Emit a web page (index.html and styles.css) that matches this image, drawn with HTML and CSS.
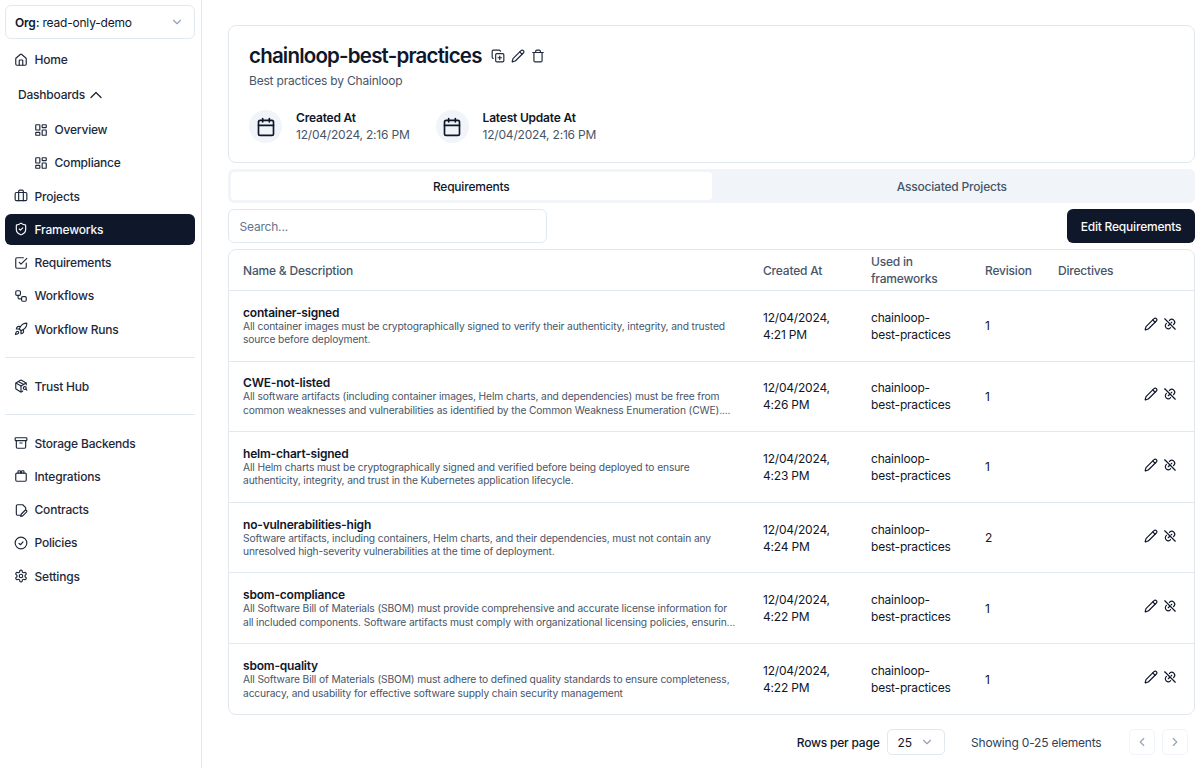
FILE: index.html
```html
<!DOCTYPE html>
<html lang="en">
<head>
  <meta charset="UTF-8">
  <title>chainloop-best-practices</title>
  <link rel="stylesheet" href="styles.css">
</head>
<body>
  <svg class="sprites" width="0" height="0" aria-hidden="true">
    <symbol id="i-home" viewBox="0 0 24 24"><path d="M15 21v-8a1 1 0 0 0-1-1h-4a1 1 0 0 0-1 1v8"/><path d="M3 10a2 2 0 0 1 .709-1.528l7-5.999a2 2 0 0 1 2.582 0l7 5.999A2 2 0 0 1 21 10v9a2 2 0 0 1-2 2H5a2 2 0 0 1-2-2z"/></symbol>
    <symbol id="i-grid" viewBox="0 0 24 24"><rect x="3" y="3" width="7" height="9" rx="1"/><rect x="14" y="3" width="7" height="5" rx="1"/><rect x="14" y="12" width="7" height="9" rx="1"/><rect x="3" y="16" width="7" height="5" rx="1"/></symbol>
    <symbol id="i-briefcase" viewBox="0 0 24 24"><path d="M16 20V4a2 2 0 0 0-2-2h-4a2 2 0 0 0-2 2v16"/><rect x="2" y="6" width="20" height="14" rx="2"/></symbol>
    <symbol id="i-shield" viewBox="0 0 24 24"><path d="M20 13c0 5-3.5 7.5-7.66 8.95a1 1 0 0 1-.67-.01C7.5 20.5 4 18 4 13V6a1 1 0 0 1 1-1c2 0 4.5-1.2 6.24-2.72a1.17 1.17 0 0 1 1.52 0C14.51 3.81 17 5 19 5a1 1 0 0 1 1 1z"/><path d="m9 12 2 2 4-4"/></symbol>
    <symbol id="i-check-square" viewBox="0 0 24 24"><path d="m9 11 3 3L22 4"/><path d="M21 12v7a2 2 0 0 1-2 2H5a2 2 0 0 1-2-2V5a2 2 0 0 1 2-2h11"/></symbol>
    <symbol id="i-workflow" viewBox="0 0 24 24"><rect x="3" y="3" width="8" height="8" rx="2"/><path d="M7 11v4a2 2 0 0 0 2 2h4"/><rect x="13" y="13" width="8" height="8" rx="2"/></symbol>
    <symbol id="i-rocket" viewBox="0 0 24 24"><path d="M4.5 16.5c-1.5 1.26-2 5-2 5s3.74-.5 5-2c.71-.84.7-2.13-.09-2.91a2.18 2.18 0 0 0-2.91-.09z"/><path d="m12 15-3-3a22 22 0 0 1 2-3.95A12.88 12.88 0 0 1 22 2c0 2.72-.78 7.5-6 11a22.35 22.35 0 0 1-4 2z"/><path d="M9 12H4s.55-3.03 2-4c1.62-1.08 5 0 5 0"/><path d="M12 15v5s3.03-.55 4-2c1.08-1.62 0-5 0-5"/></symbol>
    <symbol id="i-package" viewBox="0 0 24 24"><path d="M21 10V8a2 2 0 0 0-1-1.73l-7-4a2 2 0 0 0-2 0l-7 4A2 2 0 0 0 3 8v8a2 2 0 0 0 1 1.73l7 4a2 2 0 0 0 2 0l2-1.14"/><path d="m7.5 4.27 9 5.15"/><path d="M3.29 7 12 12l8.71-5"/><path d="M12 22V12"/><circle cx="18.5" cy="15.5" r="2.5"/><path d="M20.27 17.27 22 19"/></symbol>
    <symbol id="i-archive" viewBox="0 0 24 24"><rect x="2" y="3" width="20" height="5" rx="1"/><path d="M4 8v11a2 2 0 0 0 2 2h12a2 2 0 0 0 2-2V8"/><path d="M10 12h4"/></symbol>
    <symbol id="i-plug" viewBox="0 0 24 24"><rect x="3" y="7" width="18" height="14" rx="2"/><path d="M7 7V4a1 1 0 0 1 1-1h2a1 1 0 0 1 1 1v3"/><path d="M13 7V4a1 1 0 0 1 1-1h2a1 1 0 0 1 1 1v3"/></symbol>
    <symbol id="i-file-pen" viewBox="0 0 24 24"><path d="M11 21H6a2 2 0 0 1-2-2V5a2 2 0 0 1 2-2h9l5 5v3"/><path d="M18.600 12.900a1.900 1.900 0 0 1 2.700 2.700L15 22l-3.600.900.900-3.600z"/></symbol>
    <symbol id="i-circle-check" viewBox="0 0 24 24"><circle cx="12" cy="12" r="10"/><path d="m8.500 12.500 2.500 2.500 4.500-5"/></symbol>
    <symbol id="i-settings" viewBox="0 0 24 24"><path d="M12.220 2h-.44a2 2 0 0 0-2 2v.18a2 2 0 0 1-1 1.730l-.43.25a2 2 0 0 1-2 0l-.15-.08a2 2 0 0 0-2.730.73l-.22.38a2 2 0 0 0 .73 2.730l.15.1a2 2 0 0 1 1 1.720v.51a2 2 0 0 1-1 1.740l-.15.09a2 2 0 0 0-.73 2.730l.22.38a2 2 0 0 0 2.730.73l.15-.08a2 2 0 0 1 2 0l.43.25a2 2 0 0 1 1 1.730V20a2 2 0 0 0 2 2h.44a2 2 0 0 0 2-2v-.18a2 2 0 0 1 1-1.730l.43-.25a2 2 0 0 1 2 0l.15.08a2 2 0 0 0 2.730-.73l.22-.39a2 2 0 0 0-.73-2.730l-.15-.08a2 2 0 0 1-1-1.740v-.5a2 2 0 0 1 1-1.740l.15-.09a2 2 0 0 0 .73-2.730l-.22-.38a2 2 0 0 0-2.730-.73l-.15.08a2 2 0 0 1-2 0l-.43-.25a2 2 0 0 1-1-1.730V4a2 2 0 0 0-2-2z"/><circle cx="12" cy="12" r="3"/></symbol>
    <symbol id="i-calendar" viewBox="0 0 24 24"><path d="M8 2v4"/><path d="M16 2v4"/><rect x="3" y="4" width="18" height="18" rx="2"/><path d="M3 10h18"/></symbol>
    <symbol id="i-copy" viewBox="0 0 24 24"><path d="M15 12v6"/><path d="M12 15h6"/><rect x="8" y="8" width="14" height="14" rx="2"/><path d="M4 16c-1.100 0-2-.9-2-2V4c0-1.100.9-2 2-2h10c1.100 0 2 .9 2 2"/></symbol>
    <symbol id="i-pencil" viewBox="0 0 24 24"><path d="M21.174 6.812a1 1 0 0 0-3.986-3.987L3.842 16.174a2 2 0 0 0-.5.83l-1.321 4.352a.5.5 0 0 0 .623.622l4.353-1.32a2 2 0 0 0 .83-.497z"/><path d="m15 5 4 4"/></symbol>
    <symbol id="i-trash" viewBox="0 0 24 24"><path d="M3 6h18"/><path d="M19 6v14c0 1-1 2-2 2H7c-1 0-2-1-2-2V6"/><path d="M8 6V4c0-1 1-2 2-2h4c1 0 2 1 2 2v2"/></symbol>
    <symbol id="i-unlink" viewBox="0 0 24 24"><path d="M9 15l3-3m2-2l1-1"/><path d="M11 6l.463-.536a5 5 0 0 1 7.071 7.072l-.534.463"/><path d="M3 3l18 18"/><path d="M13 18l-.397.534a5.068 5.068 0 0 1-7.127 0a4.972 4.972 0 0 1 0-7.071l.524-.463"/></symbol>
    <symbol id="i-down" viewBox="0 0 24 24"><path d="m6 9 6 6 6-6"/></symbol>
    <symbol id="i-up" viewBox="0 0 24 24"><path d="m18 15-6-6-6 6"/></symbol>
    <symbol id="i-left" viewBox="0 0 24 24"><path d="m15 18-6-6 6-6"/></symbol>
    <symbol id="i-right" viewBox="0 0 24 24"><path d="m9 18 6-6-6-6"/></symbol>
  </svg>

  <div class="layout">
    <aside class="sidebar">
      <div class="org-select">
        <span><b>Org:</b> read-only-demo</span>
        <svg class="icon chevron"><use href="#i-down"/></svg>
      </div>

      <a class="nav-item"><svg class="icon"><use href="#i-home"/></svg>Home</a>
      <a class="nav-item nav-group">Dashboards <svg class="icon group-caret"><use href="#i-up"/></svg></a>
      <a class="nav-item nav-sub"><svg class="icon"><use href="#i-grid"/></svg>Overview</a>
      <a class="nav-item nav-sub"><svg class="icon"><use href="#i-grid"/></svg>Compliance</a>
      <a class="nav-item"><svg class="icon"><use href="#i-briefcase"/></svg>Projects</a>
      <a class="nav-item active"><svg class="icon"><use href="#i-shield"/></svg>Frameworks</a>
      <a class="nav-item"><svg class="icon"><use href="#i-check-square"/></svg>Requirements</a>
      <a class="nav-item"><svg class="icon"><use href="#i-workflow"/></svg>Workflows</a>
      <a class="nav-item"><svg class="icon"><use href="#i-rocket"/></svg>Workflow Runs</a>

      <hr class="nav-divider">
      <a class="nav-item"><svg class="icon"><use href="#i-package"/></svg>Trust Hub</a>
      <hr class="nav-divider">

      <a class="nav-item"><svg class="icon"><use href="#i-archive"/></svg>Storage Backends</a>
      <a class="nav-item"><svg class="icon"><use href="#i-plug"/></svg>Integrations</a>
      <a class="nav-item"><svg class="icon"><use href="#i-file-pen"/></svg>Contracts</a>
      <a class="nav-item"><svg class="icon"><use href="#i-circle-check"/></svg>Policies</a>
      <a class="nav-item"><svg class="icon"><use href="#i-settings"/></svg>Settings</a>
    </aside>

    <main class="content">
      <section class="summary-card">
        <div class="title-row">
          <h1>chainloop-best-practices</h1>
          <svg class="icon"><use href="#i-copy"/></svg>
          <svg class="icon"><use href="#i-pencil"/></svg>
          <svg class="icon"><use href="#i-trash"/></svg>
        </div>
        <p class="subtitle">Best practices by Chainloop</p>
        <div class="meta-row">
          <div class="meta">
            <span class="meta-icon"><svg class="icon"><use href="#i-calendar"/></svg></span>
            <div><div class="meta-label">Created At</div><div class="meta-value">12/04/2024, 2:16 PM</div></div>
          </div>
          <div class="meta">
            <span class="meta-icon"><svg class="icon"><use href="#i-calendar"/></svg></span>
            <div><div class="meta-label">Latest Update At</div><div class="meta-value">12/04/2024, 2:16 PM</div></div>
          </div>
        </div>
      </section>

      <div class="tabs">
        <div class="tab selected">Requirements</div>
        <div class="tab">Associated Projects</div>
      </div>

      <div class="toolbar">
        <input class="search" type="text" placeholder="Search...">
        <button class="btn-dark">Edit Requirements</button>
      </div>

      <div class="table-card">
        <table>
          <colgroup>
            <col class="col-name"><col class="col-date"><col class="col-used"><col class="col-rev"><col class="col-dir"><col>
          </colgroup>
          <thead>
            <tr><th>Name &amp; Description</th><th>Created At</th><th>Used in frameworks</th><th>Revision</th><th>Directives</th><th></th></tr>
          </thead>
          <tbody>
            <tr>
              <td class="req-cell"><div class="req-name">container-signed</div><div class="req-desc">All container images must be cryptographically signed to verify their authenticity, integrity, and trusted source before deployment.</div></td>
              <td>12/04/2024, 4:21 PM</td><td>chainloop-best-practices</td><td>1</td><td></td>
              <td class="actions"><svg class="icon"><use href="#i-pencil"/></svg><svg class="icon"><use href="#i-unlink"/></svg></td>
            </tr>
            <tr>
              <td class="req-cell"><div class="req-name">CWE-not-listed</div><div class="req-desc">All software artifacts (including container images, Helm charts, and dependencies) must be free from common weaknesses and vulnerabilities as identified by the Common Weakness Enumeration (CWE)....</div></td>
              <td>12/04/2024, 4:26 PM</td><td>chainloop-best-practices</td><td>1</td><td></td>
              <td class="actions"><svg class="icon"><use href="#i-pencil"/></svg><svg class="icon"><use href="#i-unlink"/></svg></td>
            </tr>
            <tr>
              <td class="req-cell"><div class="req-name">helm-chart-signed</div><div class="req-desc">All Helm charts must be cryptographically signed and verified before being deployed to ensure authenticity, integrity, and trust in the Kubernetes application lifecycle.</div></td>
              <td>12/04/2024, 4:23 PM</td><td>chainloop-best-practices</td><td>1</td><td></td>
              <td class="actions"><svg class="icon"><use href="#i-pencil"/></svg><svg class="icon"><use href="#i-unlink"/></svg></td>
            </tr>
            <tr>
              <td class="req-cell"><div class="req-name">no-vulnerabilities-high</div><div class="req-desc">Software artifacts, including containers, Helm charts, and their dependencies, must not contain any unresolved high-severity vulnerabilities at the time of deployment.</div></td>
              <td>12/04/2024, 4:24 PM</td><td>chainloop-best-practices</td><td>2</td><td></td>
              <td class="actions"><svg class="icon"><use href="#i-pencil"/></svg><svg class="icon"><use href="#i-unlink"/></svg></td>
            </tr>
            <tr>
              <td class="req-cell"><div class="req-name">sbom-compliance</div><div class="req-desc">All Software Bill of Materials (SBOM) must provide comprehensive and accurate license information for all included components. Software artifacts must comply with organizational licensing policies, ensurin...</div></td>
              <td>12/04/2024, 4:22 PM</td><td>chainloop-best-practices</td><td>1</td><td></td>
              <td class="actions"><svg class="icon"><use href="#i-pencil"/></svg><svg class="icon"><use href="#i-unlink"/></svg></td>
            </tr>
            <tr>
              <td class="req-cell"><div class="req-name">sbom-quality</div><div class="req-desc">All Software Bill of Materials (SBOM) must adhere to defined quality standards to ensure completeness, accuracy, and usability for effective software supply chain security management</div></td>
              <td>12/04/2024, 4:22 PM</td><td>chainloop-best-practices</td><td>1</td><td></td>
              <td class="actions"><svg class="icon"><use href="#i-pencil"/></svg><svg class="icon"><use href="#i-unlink"/></svg></td>
            </tr>
          </tbody>
        </table>
      </div>

      <div class="pager">
        <span class="rows-label">Rows per page</span>
        <div class="rows-select"><span>25</span><svg class="icon"><use href="#i-down"/></svg></div>
        <span class="showing">Showing 0-25 elements</span>
        <div class="pager-btns">
          <span class="page-btn"><svg class="icon"><use href="#i-left"/></svg></span>
          <span class="page-btn"><svg class="icon"><use href="#i-right"/></svg></span>
        </div>
      </div>
    </main>
  </div>
</body>
</html>
```

FILE: styles.css
```css
* {
  box-sizing: border-box;
}

body {
  margin: 0;
  font-family: Inter, "Liberation Sans", sans-serif;
  font-size: 12px;
  letter-spacing: -0.2px;
  color: #0f172a;
  background: #fff;
}

.sprites {
  position: absolute;
}

.icon {
  width: 14px;
  height: 14px;
  flex: none;
  fill: none;
  stroke: currentColor;
  stroke-width: 2;
  stroke-linecap: round;
  stroke-linejoin: round;
}

.layout {
  display: flex;
  height: 768px;
  overflow: hidden;
}

/* Sidebar */
.sidebar {
  width: 202px;
  flex: none;
  padding: 5px 6px 0 5px;
  border-right: 1px solid #e2e8f0;
}

.org-select {
  display: flex;
  justify-content: space-between;
  align-items: center;
  height: 34px;
  padding: 0 10.5px 0 9px;
  margin-bottom: 5px;
  border: 1px solid #e2e8f0;
  border-radius: 6px;
}

.org-select b {
  font-weight: 600;
}

.chevron {
  color: #94a3b8;
}

.nav-item {
  display: flex;
  align-items: center;
  gap: 6.5px;
  height: 31px;
  margin-bottom: 2.25px;
  padding: 0 9px;
  border-radius: 6px;
  font-weight: 500;
  color: #1e293b;
}

.nav-group {
  gap: 1px;
  height: 34.5px;
  padding-left: 13px;
}

.group-caret {
  width: 20px;
  height: 20px;
  stroke-width: 1.6;
}

.nav-sub {
  padding-left: 29px;
}

.nav-item.active {
  background: #0f172a;
  color: #f8fafc;
}

.nav-divider {
  height: 1px;
  margin: 12.5px 0;
  border: 0;
  background: #e2e8f0;
}

/* Main column */
.content {
  flex: 1;
  min-width: 0;
  padding: 25px 3px 0 26px;
}

.summary-card {
  height: 138px;
  padding: 16px 20px;
  border: 1px solid #e2e8f0;
  border-radius: 8px;
}

.title-row {
  display: flex;
  align-items: center;
  gap: 6px;
  color: #1e293b;
}

.title-row h1 {
  margin: 0 3px 0 0;
  font-size: 20.5px;
  line-height: 28px;
  font-weight: 600;
  letter-spacing: -0.8px;
  color: #0f172a;
}

.subtitle {
  margin: 2px 0 0;
  line-height: 17px;
  color: #475569;
}

.meta-row {
  display: flex;
  gap: 26px;
  margin-top: 21px;
}

.meta {
  display: flex;
  align-items: center;
  gap: 14px;
}

.meta-icon {
  display: flex;
  align-items: center;
  justify-content: center;
  width: 33px;
  height: 33px;
  border-radius: 50%;
  background: #f1f5f9;
}

.meta-icon .icon {
  width: 20px;
  height: 20px;
}

.meta-label {
  font-weight: 600;
  line-height: 16px;
}

.meta-value {
  line-height: 17px;
  color: #475569;
}

.tabs {
  display: flex;
  height: 34px;
  margin-top: 6px;
  padding: 3px;
  border-radius: 6px;
  background: #f1f5f9;
}

.tab {
  flex: 1;
  display: flex;
  align-items: center;
  justify-content: center;
  border-radius: 4px;
  font-weight: 500;
  color: #475569;
}

.tab.selected {
  background: #fff;
  color: #0f172a;
}

.toolbar {
  display: flex;
  justify-content: space-between;
  margin-top: 6px;
}

.search {
  width: 319px;
  height: 34px;
  padding: 0 10.5px;
  border: 1px solid #e2e8f0;
  border-radius: 6px;
  font: inherit;
  letter-spacing: inherit;
  outline: none;
}

.search::placeholder {
  color: #64748b;
}

.btn-dark {
  width: 128px;
  height: 34px;
  border: 0;
  border-radius: 6px;
  background: #0f172a;
  color: #f8fafc;
  font: inherit;
  font-weight: 500;
  letter-spacing: inherit;
}

.table-card {
  margin-top: 6px;
  border: 1px solid #e2e8f0;
  border-radius: 8px;
  overflow: hidden;
}

table {
  width: 100%;
  border-collapse: collapse;
  table-layout: fixed;
}

.col-name { width: 520px; }
.col-date { width: 108px; }
.col-used { width: 114px; }
.col-rev { width: 73px; }
.col-dir { width: 86px; }

th {
  height: 40.5px;
  padding: 0 14px;
  text-align: left;
  font-weight: 500;
  line-height: 17px;
  color: #475569;
  border-bottom: 1px solid #e2e8f0;
}

td {
  height: 70.6px;
  padding: 0 14px;
  line-height: 17px;
  color: #0f172a;
  border-bottom: 1px solid #e2e8f0;
}

tbody tr:last-child td {
  border-bottom: 0;
}

td.req-cell {
  padding-right: 10px;
}

.req-name {
  font-weight: 600;
  line-height: 15px;
}

.req-desc {
  font-size: 10.25px;
  letter-spacing: -0.13px;
  line-height: 13.5px;
  color: #475569;
}

.actions {
  padding: 0 17px 0 0;
  text-align: right;
  white-space: nowrap;
}

.actions .icon {
  margin-left: 5px;
}

/* Pagination */
.pager {
  display: flex;
  align-items: center;
  justify-content: flex-end;
  height: 26px;
  margin-top: 14px;
  padding-right: 7.5px;
}

.rows-label {
  font-weight: 500;
}

.rows-select {
  display: flex;
  align-items: center;
  justify-content: space-between;
  width: 58px;
  height: 26px;
  margin-left: 7px;
  padding: 0 10px;
  border: 1px solid #e2e8f0;
  border-radius: 5px;
}

.rows-select .icon {
  color: #94a3b8;
}

.showing {
  margin-left: 26.5px;
  color: #334155;
}

.pager-btns {
  display: flex;
  gap: 7px;
  margin-left: 27px;
}

.page-btn {
  display: flex;
  align-items: center;
  justify-content: center;
  width: 26px;
  height: 26px;
  border: 1px solid #f1f5f9;
  border-radius: 5px;
  color: #94a3b8;
}
```
